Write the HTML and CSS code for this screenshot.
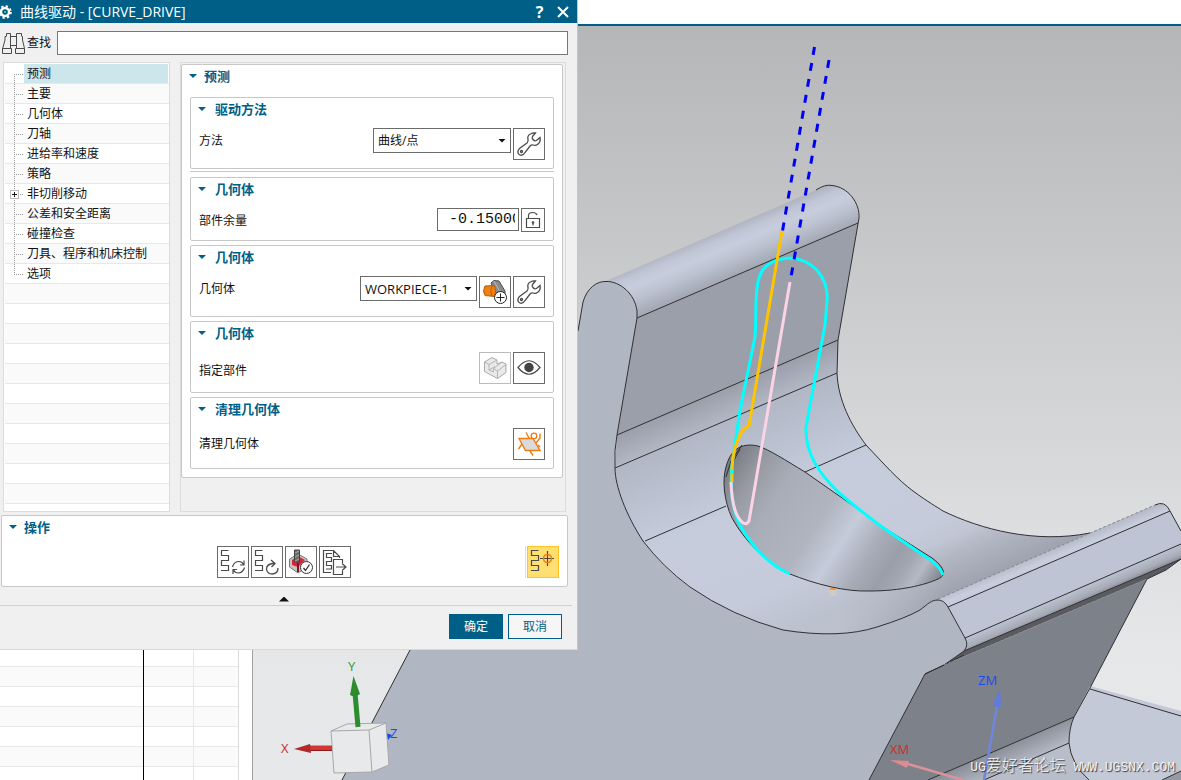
FILE: index.html
```html
<!DOCTYPE html>
<html lang="zh-CN">
<head>
<meta charset="utf-8">
<title>曲线驱动 - [CURVE_DRIVE]</title>
<link rel="stylesheet" href="styles.css">
</head>
<body>
<svg class="defs" aria-hidden="true">
  <defs>
    <symbol id="wrench" viewBox="0 0 30 30">
      <path d="M4 22.500 Q4 21 5.500 19.500 L13 14 Q14.500 12.500 14 10.500 Q13 6.500 16.500 5 Q19 3.500 21.500 4 L18.500 7.500 Q17.500 9 19 10.500 Q20.500 12.500 22.500 11.500 L26 8.500 Q27 13 23.500 15.500 Q21.500 17 19 16 Q17.500 15.500 16 17 L11 23.500 Q9 27 6 26 Q3.500 25 4 22.500 Z M8.500 22.500 a1 1 0 1 1 -2 0 a1 1 0 1 1 2 0" fill="#fff" stroke="#4a4a4a" stroke-width="1.300"/>
    </symbol>
    <symbol id="track" viewBox="0 0 30 30">
      <path d="M10.500 3.500 H3.500 V8.500 H10.500 V13.500 H3.500 V18.500 H10.500 V23.500 H3" fill="none" stroke="#4a4a4a" stroke-width="1.200"/>
    </symbol>
  </defs>
</svg>

<div class="app">
  <header class="app-top"></header>
  <main class="workspace">
    <aside class="navigator"><div class="nav-cols"></div></aside>
    <section class="viewport" aria-label="图形窗口">
      <svg class="scene" viewBox="253 26 928 754" preserveAspectRatio="xMinYMin slice">
        <defs>
          <linearGradient id="bg" x1="0" y1="26" x2="0" y2="780" gradientUnits="userSpaceOnUse">
            <stop offset="0" stop-color="#b5b6b8"/><stop offset=".45" stop-color="#d0d1d2"/><stop offset=".83" stop-color="#e6e7e9"/><stop offset="1" stop-color="#e7e8ea"/>
          </linearGradient>
          <linearGradient id="roll" x1="716" y1="232" x2="734" y2="275" gradientUnits="userSpaceOnUse">
            <stop offset="0" stop-color="#aeb3bf"/><stop offset=".2" stop-color="#c0c6d5"/><stop offset=".4" stop-color="#c7cddc"/><stop offset=".65" stop-color="#bcc2d0"/><stop offset="1" stop-color="#a4a9b5"/>
          </linearGradient>
          <linearGradient id="bend" x1="727" y1="388" x2="739" y2="416" gradientUnits="userSpaceOnUse">
            <stop offset="0" stop-color="#9b9faa"/><stop offset="1" stop-color="#b3b8c6"/>
          </linearGradient>
          <linearGradient id="valley" x1="720" y1="424" x2="806" y2="623" gradientUnits="userSpaceOnUse">
            <stop offset="0" stop-color="#b1b7c5"/><stop offset=".4" stop-color="#c5ccdb"/><stop offset=".8" stop-color="#c5cbda"/><stop offset="1" stop-color="#bcc1ce"/>
          </linearGradient>
          <linearGradient id="shade" x1="1026" y1="505" x2="1046" y2="551" gradientUnits="userSpaceOnUse">
            <stop offset="0" stop-color="#999ea9" stop-opacity="0"/><stop offset="1" stop-color="#999ea9" stop-opacity=".85"/>
          </linearGradient>
          <linearGradient id="fade" x1="840" y1="0" x2="950" y2="0" gradientUnits="userSpaceOnUse">
            <stop offset="0" stop-color="#000"/><stop offset="1" stop-color="#fff"/>
          </linearGradient>
          <mask id="shade-mask" maskUnits="userSpaceOnUse" x="578" y="360" width="603" height="300"><rect x="578" y="360" width="603" height="300" fill="url(#fade)"/></mask>
          <linearGradient id="pocket" x1="722" y1="470" x2="923" y2="603" gradientUnits="userSpaceOnUse">
            <stop offset="0" stop-color="#787b81"/><stop offset=".12" stop-color="#979aa3"/><stop offset=".25" stop-color="#a9adb7"/><stop offset=".45" stop-color="#afb4bf"/><stop offset=".58" stop-color="#c5cbda"/><stop offset=".7" stop-color="#a9adb9"/><stop offset=".8" stop-color="#9a9ea8"/><stop offset=".86" stop-color="#a3a7b2"/><stop offset=".92" stop-color="#b4b9c4"/><stop offset="1" stop-color="#83868c"/>
          </linearGradient>
          <linearGradient id="ridge" x1="1046" y1="551" x2="1053" y2="568" gradientUnits="userSpaceOnUse">
            <stop offset="0" stop-color="#b5bac7"/><stop offset=".5" stop-color="#c8cedd"/><stop offset="1" stop-color="#c0c6d4"/>
          </linearGradient>
          <linearGradient id="lip" x1="1070" y1="592" x2="1077" y2="608" gradientUnits="userSpaceOnUse">
            <stop offset="0" stop-color="#bdc2d0"/><stop offset=".55" stop-color="#a6abb7"/><stop offset="1" stop-color="#70737a"/>
          </linearGradient>
          <linearGradient id="fillet" x1="1015" y1="742" x2="1026" y2="766" gradientUnits="userSpaceOnUse">
            <stop offset="0" stop-color="#8b8f98"/><stop offset="1" stop-color="#b9becb"/>
          </linearGradient>
        </defs>
        <rect x="253" y="26" width="928" height="754" fill="url(#bg)"/>

        <!-- upper roll and inner wall -->
        <path d="M606 281 L816 190 Q840 177 853 200 Q860 211 858 223 L637 318Z" fill="url(#roll)"/>
        <path d="M637 318 L858 223 L838 340 L617 435Z" fill="#9b9faa"/>
        <path d="M617 435 L838 340 L837 373 L615 468Z" fill="url(#bend)"/>
        <path d="M615 468 L837 373 C838 400 851 425 866 445 C885 465 897 479 913 491 C928 502 937 507 943 511 C980 529 1035 544 1090 533 L1140 512 L938 600 L907 617 C820 655 720 632 643 541 C626 515 614 488 615 468Z" fill="url(#valley)"/>
        <path d="M837 373 C838 400 851 425 866 445 C885 465 897 479 913 491 C928 502 937 507 943 511 C980 529 1035 544 1090 533 L938 600 L907 620 L840 640Z" fill="url(#shade)" mask="url(#shade-mask)"/>

        <!-- near side of the block -->
        <path d="M578 331 L583 302 C587 288 597 281 606 281.500 C620 281 635 294 637 311 L637 318 L617 435 Q614 450 615 468 C615 486 626 515 643 541 Q663 567 690 587 Q732 616 783 630 Q840 639 877 627 Q906 618 920 610 C928 604 931 600 938 600 Q944 600 948 607 L965 638 Q969 645 964 651 L944 665 L925 674 L869 780 H342 L410 650 L578 330Z" fill="#b0b6c2"/>

        <!-- right ridge -->
        <path d="M938 599 L1155 505 Q1165 501 1170 511 L948 607Q944 600 938 599Z" fill="url(#ridge)"/>
        <path d="M948 607 L1170 511 L1181 531 V544 L965 638Z" fill="#bec4d3"/>
        <path d="M965 638 L1181 544 V559 L964 651 Q969 645 965 638Z" fill="url(#lip)"/>
        <path d="M964 651 L1181 559 L1166 570 L1147 579 L944 665Z" fill="#595b61"/>
        <path d="M925 674 L944 665 L1147 579 L1090 688 L1074 717 L928 780 H869Z" fill="#7d8189"/>
        <path d="M1074 717 L928 780 H987 L1069 743 Q1069 728 1074 717Z" fill="url(#fillet)"/>
        <path d="M1069 743 L984 780 H1181 V711 L1090 686 L1074 717 Q1069 728 1069 743Z" fill="#c4c9d8"/>
        <path d="M1069 743 L984 780 H1089 Q1071 764 1069 743Z" fill="#b8bdca"/>
        <path d="M1162 780 L1181 771 V780Z" fill="#9599a3"/>

        <!-- edges -->
        <g fill="none" stroke="#2e3033" stroke-width="1">
          <path d="M816 190 Q825 184 832 185.500 C848 187 860 203 859 218 L838 340 L837 373 C838 400 851 425 866 445 C885 465 897 479 913 491 C928 502 937 507 943 511 C980 529 1035 544 1090 533"/>
          <path d="M637 318 L858 223 M617 435 L838 340 M615 468 L837 373 M645 541 L726 506 M805 472 L866 445"/>
          <path d="M578 331 L583 302 C587 288 597 281 606 281.500 C620 281 635 294 637 311 L637 318 L617 435 Q614 450 615 468 C615 486 626 515 643 541 Q663 567 690 587 Q732 616 783 630 Q840 639 877 627 Q906 618 920 610 C928 604 931 600 938 600 Q944 600 948 607 L965 638 Q969 645 964 651 L944 665 L925 674 L869 780 M410 650 L342 780"/>
          <path d="M1155 505 Q1165 500 1170 511 L1181 531 M948 607 L1170 511 M965 638 L1181 544 M964 651 L1181 559 M925 674 L944 665 L964 655"/>
          <path d="M1181 559 L1166 570 L1147 579 L1090 688 L1074 717 Q1069 728 1069 743 Q1071 764 1089 780 M1074 717 L928 780 M1069 743 L984 780 M1090 689 L1181 716 M1162 780 L1181 771"/>
        </g>
        <path d="M938 599 L1155 505 M944 665 L1147 579" fill="none" stroke="#85888f" stroke-dasharray="3 2"/>

        <!-- pocket -->
        <path d="M758 446 C770 450 785 460 805 472 L855 507 L883 527 L932 558 C943 566 948 575 938 579 C925 585 900 591 870 591 C845 592 815 584 790 574 C765 562 744 540 732 518 C724 501 722 480 726 467 C730 451 740 442 758 446Z" fill="url(#pocket)" stroke="#2e3033"/>
        <path d="M726 477 L731 461 L742 445 M733 462 L740 449" fill="none" stroke="#2e3033"/>

        <!-- drive curve and tool path -->
        <g fill="none" stroke-width="3" stroke-linejoin="round">
          <path d="M790 574 C765 563 747 540 738 521 C732 505 730 485 732 465 L740 410 L755 337 C757 315 754 294 759 278 C763 263 777 259 790 258 C811 259 829 276 827 301 L825 325 L806 427 C805 455 821 475 838 492 Q858 509 882 527 L923 555 Q940 565 943 575" stroke="#00ffff"/>
          <path d="M782 231 L749 426 Q743 428 740 435 Q733 448 732 468 V482" stroke="#ffc400"/>
          <path d="M732 470 V474" stroke="#00ffff"/>
          <path d="M790 282 L749 521 Q747 525 743 523 Q732 514 731 482" stroke="#fbd3e5"/>
          <path d="M814.500 47 L782.500 231" stroke="#0000f5" stroke-dasharray="8 8.200"/>
          <path d="M829 60 L791 277" stroke="#0000f5" stroke-dasharray="8 8.200"/>
        </g>
        <circle cx="833" cy="592" r="4" fill="#d8cfc0" opacity=".6"/><path d="M830 588 h6 v2 h-6z" fill="#ff9635"/>

        <!-- machine axes -->
        <path d="M984 780 L997 706" stroke="#6f86df" stroke-width="2.500"/><path d="M1000 688 L993 705 Q997 709 1001 706Z" fill="#5f7be0"/>
        <path d="M963 780 L908 764" stroke="#dc9298" stroke-width="2.500"/><path d="M890 760 L909 761 L907 768Z" fill="#df8a8e"/>
        <text class="axis" x="978" y="685" fill="#1a4bea">ZM</text>
        <text class="axis" x="890" y="754" fill="#d22b2b">XM</text>

        <!-- view triad -->
        <path d="M386 733 L392 735 L388 740Z" fill="#1a4bea"/>
        <path d="M331 731 L347 724 L386 723 L389 765 L372 772 L334 773Z" fill="#e8e9eb" stroke="#a7a7a7"/>
        <path d="M331 731 L369 730 L386 723 M369 730 L372 772" fill="none" stroke="#a7a7a7"/>
        <path d="M355 693 L358 727" stroke="#2b8d2d" stroke-width="5"/><path d="M353.500 676 L350 695 Q355 698 360 694Z" fill="#2b8d2d"/>
        <path d="M332 748 H309" stroke="#d43636" stroke-width="5"/><path d="M332 750.500 H309" stroke="#8e1c1c"/><path d="M294 749 L310 744 L311 753Z" fill="#b32828"/>
        <text class="axis" x="348" y="671" fill="#319b35">Y</text>
        <text class="axis" x="281" y="753" fill="#d22b2b">X</text>
        <text class="axis" x="390" y="738" fill="#1a4bea">Z</text>
      </svg>
      <p class="watermark">UG<span>爱好者论坛</span> WWW.UGSNX.COM</p>
    </section>
  </main>
</div>

<div class="dialog" role="dialog" aria-labelledby="dlg-title">
  <header class="titlebar">
    <svg class="gear" viewBox="0 0 16 16"><circle cx="5" cy="8" r="4" fill="none" stroke="#fff" stroke-width="2.400"/><circle cx="5" cy="8" r="5.800" fill="none" stroke="#fff" stroke-width="2" stroke-dasharray="2.300 2.255"/><circle cx="5" cy="8" r="1" fill="#8fb8cc"/></svg>
    <h1 id="dlg-title">曲线驱动 - [CURVE_DRIVE]</h1>
    <button class="title-btn" type="button" aria-label="帮助">?</button>
    <button class="title-btn" type="button" aria-label="关闭"><svg viewBox="0 0 12 12" width="12" height="12"><path d="M1 1 L11 11 M11 1 L1 11" stroke="#fff" stroke-width="2"/></svg></button>
  </header>

  <div class="search">
    <svg viewBox="0 0 24 24" width="24" height="24"><path d="M5.500 5 V2.500 H9.500 V17 M1.500 18 L4 9 V5.500 H5.500 M1.500 18 V22.500 H10.500 V17.500 H1.500 M20.500 5 V2.500 H15.500 V17 M23.500 17.500 L21.500 9 V5.500 H20.500 M14.500 17.500 H23.500 V22.500 H14.500Z M9.500 5.500 H15.500 M9.500 14.500 H15.500" fill="none" stroke="#4a4a4a"/></svg>
    <label for="find">查找</label>
    <input id="find" type="text">
  </div>

  <div class="body">
    <ul class="tree">
      <li class="selected"><span>预测</span></li>
      <li><span>主要</span></li>
      <li><span>几何体</span></li>
      <li><span>刀轴</span></li>
      <li><span>进给率和速度</span></li>
      <li><span>策略</span></li>
      <li class="branch"><span>非切削移动</span></li>
      <li><span>公差和安全距离</span></li>
      <li><span>碰撞检查</span></li>
      <li><span>刀具、程序和机床控制</span></li>
      <li><span>选项</span></li>
    </ul>

    <div class="pane">
      <section class="group">
        <h2>预测</h2>
        <section class="card">
          <h3>驱动方法</h3>
          <div class="row">
            <label for="method">方法</label>
            <span class="select method"><select id="method"><option>曲线/点</option></select></span>
            <button class="tool" type="button" aria-label="编辑"><svg><use href="#wrench"/></svg></button>
          </div>
        </section>
        <hr>
        <section class="card">
          <h3>几何体</h3>
          <div class="row">
            <label for="stock">部件余量</label>
            <input id="stock" class="number" type="text" value="-0.15000">
            <button class="tool lock" type="button" aria-label="解锁"><svg viewBox="0 0 22 22"><path d="M4.500 9.500 H17.500 V18.500 H4.500Z M6.500 9.500 V6 Q7 3.500 10.500 3.500 Q14 3.500 15 6 M11 14 V16.500" fill="none" stroke="#4a4a4a" stroke-width="1.200"/><circle cx="11" cy="13.500" r="1.300" fill="#4a4a4a"/></svg></button>
          </div>
        </section>
        <section class="card">
          <h3>几何体</h3>
          <div class="row">
            <label for="geometry">几何体</label>
            <span class="select geometry"><select id="geometry"><option>WORKPIECE-1</option></select></span>
            <button class="tool" type="button" aria-label="新建几何体"><svg viewBox="0 0 30 30"><path d="M11 6 L14 3.500 L19 4 L25 14 V20 L19 25 L15 15Z" fill="#8a8a8a" stroke="#4a4a4a"/><path d="M14 4 L20 15" stroke="#bbb"/><path d="M5 9 L14 8.500 Q17 13 14.500 19.500 L5 18.500 Q2 14 5 9Z" fill="#f08010" stroke="#b85c08"/><path d="M12 8.500 Q9.500 14 12 19.500" fill="none" stroke="#b85c08"/><circle cx="20.500" cy="20.500" r="6" fill="#fff" stroke="#222"/><path d="M16.500 20.500 H24.500 M20.500 16.500 V24.500" stroke="#222"/></svg></button>
            <button class="tool" type="button" aria-label="编辑几何体"><svg><use href="#wrench"/></svg></button>
          </div>
        </section>
        <section class="card">
          <h3>几何体</h3>
          <div class="row low">
            <span class="label">指定部件</span>
            <button class="tool" type="button" aria-label="指定部件" disabled><svg viewBox="0 0 30 30"><path d="M4.500 9 L12 4.500 L17 7 V11 L22 9 L26 11 V19.500 L17.500 25.500 L4.500 18.500Z" fill="#e9e9e9" stroke="#aaa"/><path d="M4.500 9 L9 11.500 V17 L13.500 19 V15.500 L17.500 18 V25.500 M9 11.500 L17 7 M13.500 15.500 L22 9 M17.500 18 L26 11.500 M9 17 L15 13.500" fill="none" stroke="#b5b5b5"/></svg></button>
            <button class="tool" type="button" aria-label="显示"><svg viewBox="0 0 30 30"><path d="M4 14.500 Q15 1 26 14.500 Q15 28 4 14.500Z" fill="#fff" stroke="#4a4a4a" stroke-width="1.200"/><circle cx="15" cy="14.500" r="4.700" fill="#444"/></svg></button>
          </div>
        </section>
        <section class="card">
          <h3>清理几何体</h3>
          <div class="row centered">
            <span class="label">清理几何体</span>
            <button class="tool" type="button" aria-label="清理几何体"><svg viewBox="0 0 30 30"><path d="M5 9.500 H19 L26 21.500 H11.500Z" fill="#dadada" stroke="#ee7c14" stroke-width="1.400"/><path d="M12 3.500 L15 9 M16 22 L19 26.500 M8 15 L4.500 20 M22 14 L26 9 V4.500 M24 16 L26 18" fill="none" stroke="#ee7c14" stroke-width="1.400"/><circle cx="20" cy="7" r="2.800" fill="#fff" stroke="#ee7c14" stroke-width="1.300"/></svg></button>
          </div>
        </section>
      </section>
    </div>
  </div>

  <section class="actions">
    <h2>操作</h2>
    <div class="action-row">
      <div class="buttons">
        <button class="tool" type="button" aria-label="生成"><svg viewBox="0 0 30 30"><use href="#track" width="30" height="30"/><path d="M14.500 20 Q16 14.500 21 14.500 Q24 14.500 25.500 17.500 M26 13.500 V18 H22 M26.500 20.500 Q25 26 20 26 Q17 26 15.500 23 M15 27 V22.500 H19" fill="none" stroke="#4a4a4a" stroke-width="1.200"/></svg></button>
        <button class="tool" type="button" aria-label="重播"><svg viewBox="0 0 30 30"><use href="#track" width="30" height="30"/><path d="M23 16.500 H20.500 Q14.500 17.500 14.500 22 Q15 27 20.500 27 Q26 26.500 26 21 M19 13 L23 16.500 L19.500 20" fill="none" stroke="#4a4a4a" stroke-width="1.300"/></svg></button>
        <button class="tool" type="button" aria-label="确认"><svg viewBox="0 0 30 30"><path d="M3.500 12 L12 7 L21 12 V20 L12 26 L3.500 20Z" fill="#c4c4c4" stroke="#777"/><path d="M6 13 L12 9 L19 13 L12 20 L6 18Z" fill="#db2435"/><path d="M12 16 V25" stroke="#8c101e" stroke-width="2"/><path d="M8.500 3 H13.500 V15 H8.500Z" fill="#6c6c6c" stroke="#444"/><path d="M9 6 l4 -2 M9 10 l4 -2 M9 14 l4 -2" stroke="#aaa"/><circle cx="20.500" cy="20.500" r="6" fill="#fff" stroke="#333"/><path d="M17.500 21 L19.500 23.500 L23.500 17.500" fill="none" stroke="#333" stroke-width="1.300"/></svg></button>
        <button class="tool" type="button" aria-label="列表"><svg viewBox="0 0 30 30"><path d="M11 25.500 H3.500 V3.500 H13.500 L19.500 9.500 V11 M13.500 3.500 V9.500 H19.500 M12 6.500 H6.500 V10.500 H11.500 V14.500 H6.500 V18.500 H11.500 V22 H6 M22.500 16 V12.500 H13.500 V27.500 H22.500 V24 M16 20 H26 M22 16.500 L26 20 L22 23.500" fill="none" stroke="#4a4a4a" stroke-width="1.200"/></svg></button>
      </div>
      <button class="tool active" type="button" aria-label="显示刀轨"><svg viewBox="0 0 30 30"><use href="#track" width="30" height="30"/><path d="M12 11.500 H26 M19.500 4 V19" stroke="#444" stroke-width="1.200"/><circle cx="19.500" cy="11.500" r="4" fill="none" stroke="#f08010" stroke-width="1.600"/></svg></button>
    </div>
  </section>
  <button class="collapse" type="button" aria-label="折叠"></button>
  <footer class="footer">
    <button class="primary" type="button">确定</button>
    <button type="button">取消</button>
  </footer>
</div>
</body>
</html>
```
FILE: styles.css
```css
* { box-sizing: border-box; }

body {
  margin: 0;
  height: 100vh;
  overflow: hidden;
  font: 12px/20px "Open Sans", "Noto Sans CJK SC", sans-serif;
  color: #111;
}

h1, h2, h3, p, ul { margin: 0; padding: 0; }
button, input, select { font: inherit; color: inherit; margin: 0; border-radius: 0; }
svg { display: block; }
.defs { position: absolute; width: 0; height: 0; }

/* Application behind the dialog */
.app { display: flex; flex-direction: column; height: 100%; background: #fff; }
.app-top { height: 26px; flex: none; border-bottom: 2px solid #005f87; }
.workspace { flex: 1; min-height: 0; display: flex; }
.navigator {
  width: 253px;
  flex: none;
  padding-right: 13px;
  border-right: 1px solid #a0a0a0;
}
.nav-cols {
  height: 100%;
  border-right: 1px solid #dcdcdc;
  background:
    linear-gradient(#000, #000) 143px 0 / 1px 100% no-repeat,
    linear-gradient(#e8e8e8, #e8e8e8) 193px 0 / 1px 100% no-repeat,
    repeating-linear-gradient(#e8e8e8 0 1px, #fafafa 1px 20px, #e8e8e8 20px 21px, #fff 21px 40px);
}
.viewport { flex: 1; min-width: 0; position: relative; overflow: hidden; }
.scene { width: 100%; height: 100%; }
.axis { font: 13px "Open Sans", sans-serif; }
.watermark {
  position: absolute;
  right: 6px;
  bottom: 2px;
  font: 13px/20px "Liberation Mono", monospace;
  color: #f4f4f4;
  text-shadow: 1px 1px 1px #333;
  white-space: nowrap;
}
.watermark span { font-family: "Noto Sans CJK SC", sans-serif; font-size: 16px; font-weight: 300; }

/* Dialog window */
.dialog {
  position: absolute;
  top: 0;
  left: 0;
  width: 578px;
  display: flex;
  flex-direction: column;
  background: #f0f0f0;
  border-right: 1px solid #c4c4c4;
  border-bottom: 1px solid #d8d8d8;
}
.titlebar {
  height: 23px;
  display: flex;
  align-items: center;
  padding-right: 3px;
  background: #005f87;
  color: #fff;
}
.gear { width: 16px; height: 16px; margin-right: 4px; }
.titlebar h1 { flex: 1; font-size: 14px; line-height: 22px; font-weight: 400; }
.title-btn {
  width: 23px;
  height: 22px;
  padding: 0;
  display: grid;
  place-items: center;
  border: 0;
  background: none;
  font-size: 16px;
  line-height: 22px;
  font-weight: 700;
}

.search { display: flex; align-items: center; padding: 8px 9px 7px 1px; }
.search label { width: 30px; margin: 0 0 0 2px; }
.search input { flex: 1; height: 24px; border: 1px solid #777; background: #fff; padding: 0 4px; }

.body { display: grid; grid-template-columns: 167px 1fr; gap: 10px; padding: 0 11px 0 3px; }

.tree {
  list-style: none;
  padding: 1px 1px 7px 1px;
  border: 1px solid #dcdcdc;
  background: repeating-linear-gradient(#fff 0 19px, #e8e8e8 19px 20px, #fafafa 20px 39px, #e8e8e8 39px 40px) 1px 1px / 100% 440px no-repeat #fff;
}
.tree li { display: flex; height: 20px; }
.tree li::before {
  content: "";
  width: 19px;
  background:
    repeating-linear-gradient(90deg, #999 0 1px, transparent 1px 2px) 9px 10px / 9px 1px no-repeat,
    repeating-linear-gradient(#999 0 1px, transparent 1px 2px) 9px 0 / 1px 100% no-repeat;
}
.tree li:first-child::before {
  background:
    linear-gradient(#fff, #fff) 0 0 / 100% 10px no-repeat,
    repeating-linear-gradient(90deg, #999 0 1px, transparent 1px 2px) 9px 10px / 9px 1px no-repeat,
    repeating-linear-gradient(#999 0 1px, transparent 1px 2px) 9px 0 / 1px 100% no-repeat;
}
.tree li:last-child::before {
  background:
    repeating-linear-gradient(90deg, #999 0 1px, transparent 1px 2px) 9px 10px / 9px 1px no-repeat,
    repeating-linear-gradient(#999 0 1px, transparent 1px 2px) 9px 0 / 1px 10px no-repeat;
}
.tree li.branch::before {
  background:
    linear-gradient(#111, #111) 7px 10px / 5px 1px no-repeat,
    linear-gradient(#111, #111) 9px 8px / 1px 5px no-repeat,
    linear-gradient(#fff, #fff) 6px 7px / 7px 7px no-repeat,
    linear-gradient(#bbb, #bbb) 5px 6px / 9px 9px no-repeat,
    repeating-linear-gradient(90deg, #999 0 1px, transparent 1px 2px) 9px 10px / 9px 1px no-repeat,
    repeating-linear-gradient(#999 0 1px, transparent 1px 2px) 9px 0 / 1px 100% no-repeat;
}
.tree span { flex: 1; padding-left: 3px; line-height: 19px; }
.tree .selected span { height: 19px; background: #cde6eb; }

.pane { border: 1px solid #dcdcdc; padding: 1px 2px 33px 0; }
.group {
  display: flex;
  flex-direction: column;
  gap: 4px;
  padding: 0 8px 8px;
  border: 1px solid #c8c8c8;
  border-radius: 2px;
  background: #fff;
}
h2, h3 {
  display: flex;
  align-items: center;
  font-size: 13px;
  line-height: 22px;
  font-weight: 700;
  color: #005f87;
}
h2::before, h3::before {
  content: "";
  width: 8px;
  height: 4px;
  margin-right: 7px;
  background: #005f87;
  clip-path: polygon(0 0, 100% 0, 50% 100%);
}
.group > h2 { height: 28px; margin-left: -1px; padding-bottom: 6px; }
.card { border: 1px solid #c8c8c8; border-radius: 2px; background: #fff; }
.card h3 { height: 30px; padding: 0 0 8px 7px; }
.card h3::before { margin-right: 9px; }
.row { display: flex; gap: 2px; padding: 0 8px 8px 8px; align-items: flex-start; }
.row label, .row .label { flex: 1; line-height: 24px; }
.row label { line-height: 26px; }
.row.centered { align-items: center; }
.row.low .label { padding-top: 7px; }
.row .number, .row .lock { align-self: flex-start; }
.group hr { width: 100%; height: 1px; margin: -2px 0 1px; border: 0; background: #c8c8c8; }
.row:has(.lock) { height: 32px; }

.select { display: grid; align-items: center; }
.select select, .select::after { grid-area: 1 / 1; }
.select select {
  appearance: none;
  width: 100%;
  height: 25px;
  padding: 0 4px;
  border: 1px solid #6b6b6b;
  background: #fff;
}
.select::after {
  content: "";
  justify-self: end;
  width: 8px;
  height: 4px;
  margin-right: 5px;
  background: #111;
  clip-path: polygon(0 0, 100% 0, 50% 100%);
  pointer-events: none;
}
.method { width: 138px; }
.geometry { width: 117px; }
.geometry select { font-size: 13px; }
.number {
  width: 82px;
  height: 23px;
  padding: 0 3px 0 11px;
  border: 1px solid #6b6b6b;
  background: #fff;
  font: 15px/20px "Liberation Mono", monospace;
}

.tool {
  width: 32px;
  height: 32px;
  flex: none;
  padding: 0;
  border: 1px solid #6b6b6b;
  background: #fff;
}
.tool svg { width: 100%; height: 100%; }
.tool:disabled { border-color: #bbb; }
.tool.lock { width: 24px; height: 24px; }
.tool.active { justify-self: end; border-color: #ffc425; background: #ffdf70; box-shadow: -1px 0 #fff, -2px 0 #ffe08a; }

.actions {
  margin: 3px 9px 0 1px;
  padding: 0 8px 8px 7px;
  border: 1px solid #c8c8c8;
  border-radius: 2px;
  background: #fff;
}
.actions h2 { height: 30px; padding-bottom: 8px; }
.action-row { display: grid; grid-template-columns: 1fr auto 1fr; }
.buttons { grid-column: 2; display: flex; gap: 2px; }

.collapse {
  height: 18px;
  margin-right: 9px;
  padding: 0;
  border: 0;
  background: none;
  display: grid;
  place-items: center;
}
.collapse::before {
  content: "";
  width: 10px;
  height: 5px;
  margin-top: 6px;
  background: #111;
  clip-path: polygon(50% 0, 100% 100%, 0 100%);
}
.footer {
  display: flex;
  justify-content: flex-end;
  gap: 5px;
  margin-right: 5px;
  padding: 8px 10px 10px;
  border-top: 1px solid #d0d0d0;
}
.footer button {
  width: 54px;
  height: 25px;
  padding: 0;
  border: 1px solid #005f87;
  background: #f6f6f6;
  color: #005f87;
}
.footer .primary { background: #005f87; color: #fff; }
```
